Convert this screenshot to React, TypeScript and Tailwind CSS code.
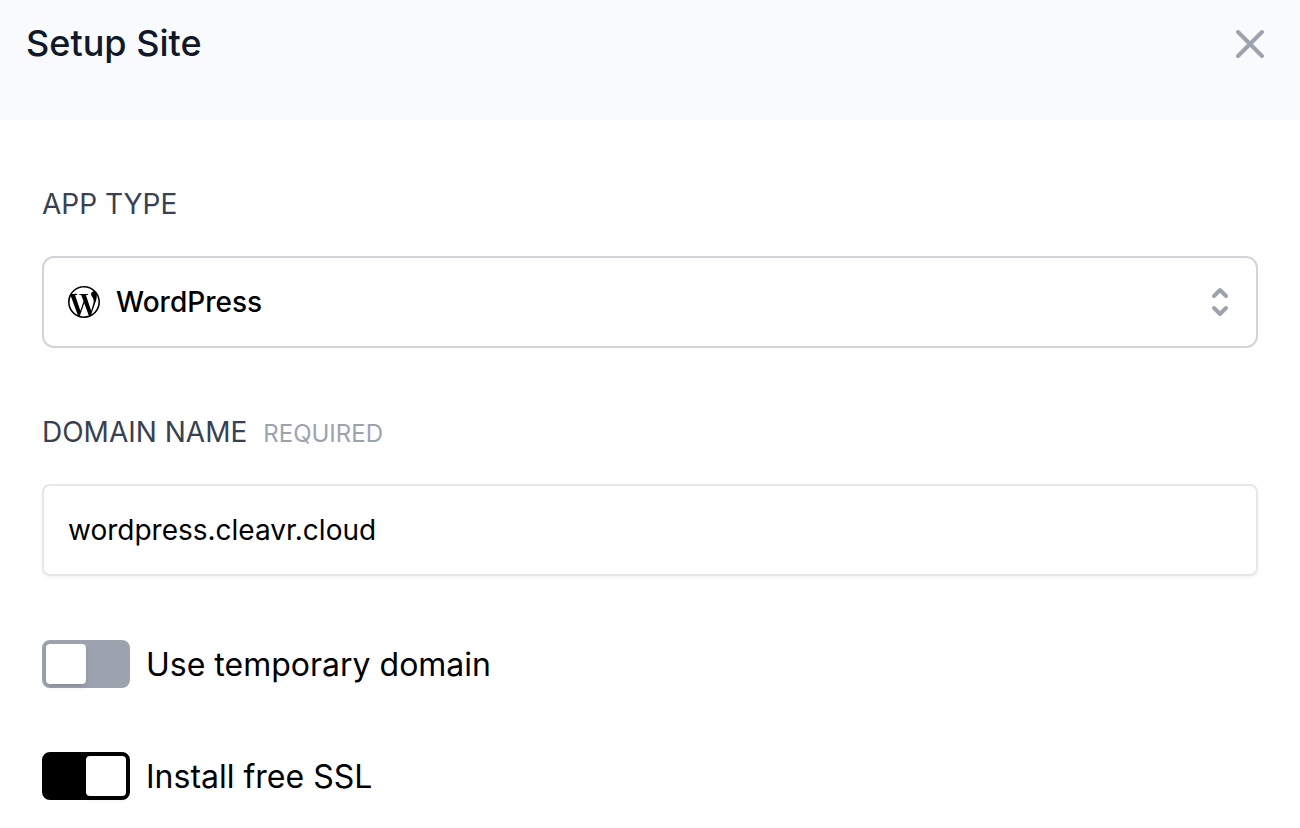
import { useState } from "react";
import { SiWordpress } from "react-icons/si";

function Toggle({ id, label, initial }: { id: string; label: string; initial: boolean }) {
  const [on, setOn] = useState(initial);
  return (
    <div className="flex items-center gap-4">
      <button
        id={id}
        type="button"
        role="switch"
        aria-checked={on}
        aria-labelledby={`${id}-label`}
        onClick={() => setOn(!on)}
        className={`flex h-12 w-22 shrink-0 items-center rounded-lg border-4 ${
          on ? "justify-end border-black bg-black" : "justify-start border-[#9ca3af] bg-[#9ca3af]"
        }`}
      >
        <span className="h-10 w-10 rounded-sm bg-white shadow-md" />
      </button>
      <label id={`${id}-label`} htmlFor={id} className="pt-0.5 text-[32px] leading-[46px]">
        {label}
      </label>
    </div>
  );
}

export default function App() {
  const [domain, setDomain] = useState("wordpress.cleavr.cloud");
  return (
    <main className="min-h-screen bg-white font-['Inter','Liberation_Sans',sans-serif] text-black">
      <header className="flex h-30 items-start justify-between bg-[#f9fafb] px-[26px] pt-4">
        <h1 className="text-[36px] leading-[54px] font-medium text-[#111827]">Setup Site</h1>
        <button type="button" aria-label="Close" className="pt-1 text-[#9ca3af]">
          <svg className="h-12 w-12" viewBox="0 0 24 24" fill="none" stroke="currentColor" strokeWidth="2" strokeLinecap="round" strokeLinejoin="round">
            <path d="M6 18L18 6M6 6l12 12" />
          </svg>
        </button>
      </header>
      <form className="px-[42px] pt-16" onSubmit={(e) => e.preventDefault()}>
        <label htmlFor="app-type" className="block text-[28px] leading-10 text-[#374151]">
          APP TYPE
        </label>
        <div className="mt-8 grid items-center">
          <select
            id="app-type"
            className="col-start-1 row-start-1 h-[92px] w-full appearance-none rounded-xl border-2 border-[#d1d5db] bg-white pr-20 pl-[72px] text-[28px] font-medium"
          >
            <option>WordPress</option>
          </select>
          <SiWordpress className="pointer-events-none col-start-1 row-start-1 ml-[26px] h-8 w-8" />
          <svg className="pointer-events-none col-start-1 row-start-1 mr-[18px] h-10 w-10 justify-self-end text-[#9ca3af]" viewBox="0 0 20 20" fill="none" stroke="currentColor" strokeWidth="2" strokeLinecap="round" strokeLinejoin="round">
            <path d="M7 7l3-3 3 3m0 6l-3 3-3-3" />
          </svg>
        </div>
        <div className="mt-16 flex items-baseline gap-4">
          <label htmlFor="domain" className="text-[28px] leading-10 text-[#374151]">
            DOMAIN NAME
          </label>
          <span className="text-[24px] leading-8 text-[#9ca3af]">REQUIRED</span>
        </div>
        <input
          id="domain"
          type="text"
          value={domain}
          onChange={(e) => setDomain(e.target.value)}
          className="mt-8 h-[92px] w-full rounded-lg border-2 border-[#e5e7eb] px-6 text-[28px] shadow-[0_2px_4px_rgba(0,0,0,0.05)]"
        />
        <div className="mt-16 flex flex-col gap-16">
          <Toggle id="temporary" label="Use temporary domain" initial={false} />
          <Toggle id="ssl" label="Install free SSL" initial={true} />
        </div>
      </form>
    </main>
  );
}
